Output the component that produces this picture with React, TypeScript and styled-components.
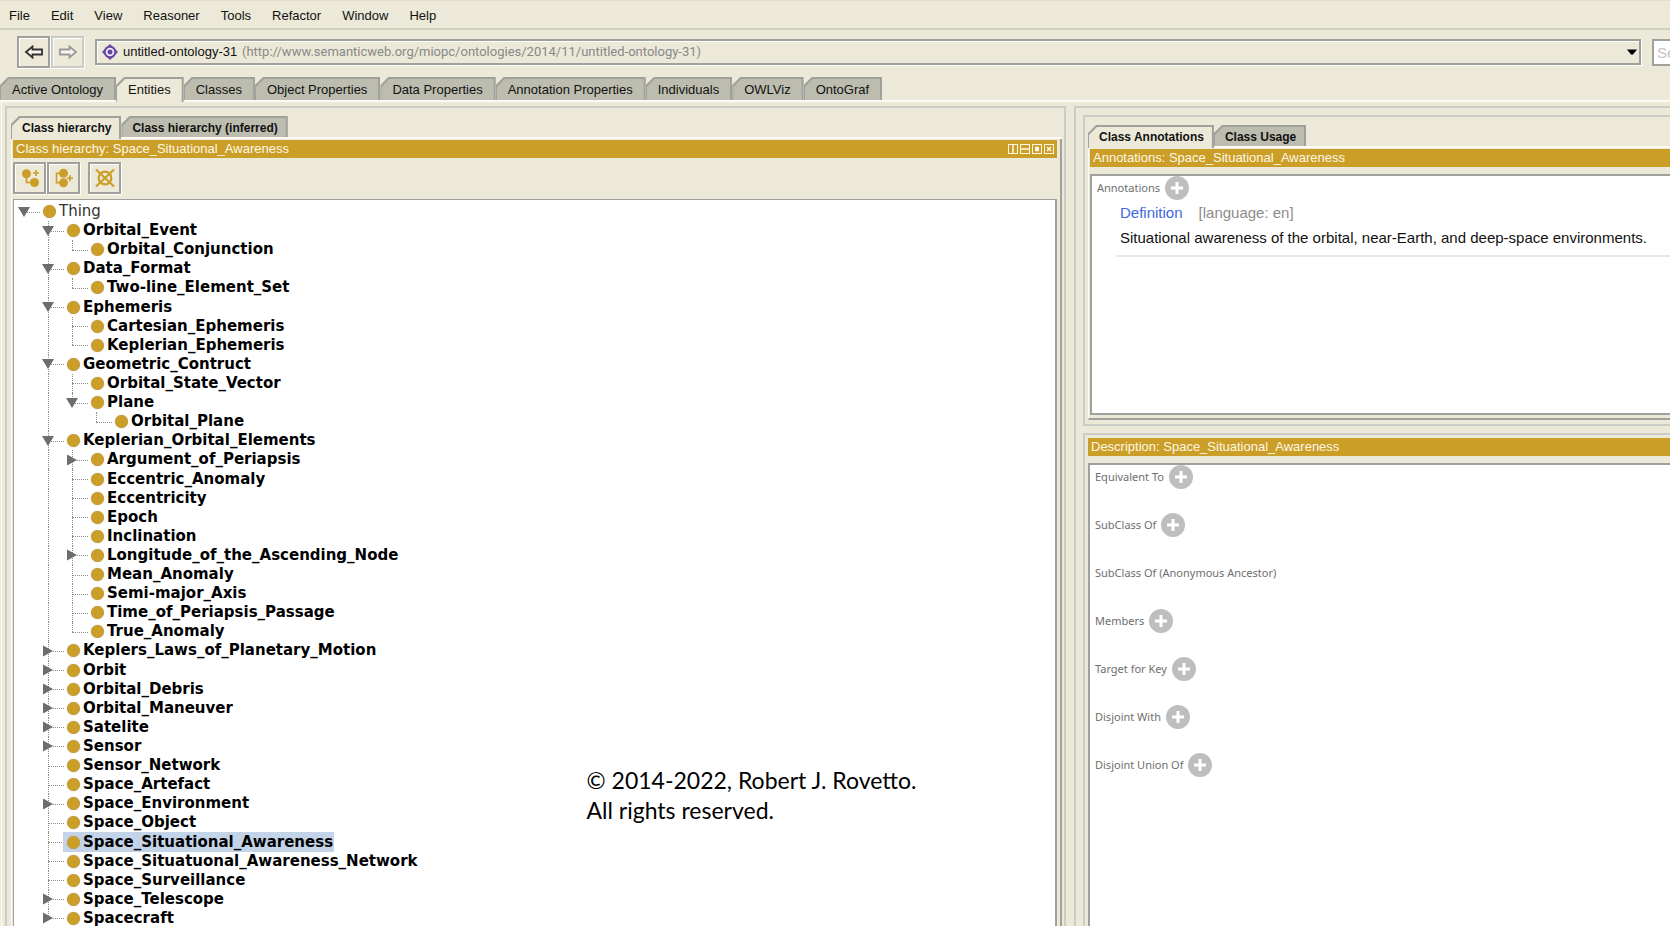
import React, { useState } from 'react';
import styled, { createGlobalStyle, css } from 'styled-components';

const color = {
  face: '#ece9d8',
  tab: '#bcbdae',
  edge: '#a0a19d',
  soft: '#cbccc6',
  gold: '#cb9e28',
  select: '#c3d3e8',
  label: '#6e6e6e',
};

const GlobalStyle = createGlobalStyle`
  * { box-sizing: border-box; }
  body {
    margin: 0;
    background: ${color.face};
    color: #111;
    font: 13px/16px "Liberation Sans", Arial, sans-serif;
    overflow: hidden;
  }
  button, input, select { font: inherit; color: inherit; }
  ul { list-style: none; margin: 0; padding: 0; }
`;

const Window = styled.div`
  display: flex;
  flex-direction: column;
  height: 100vh;
  overflow: hidden;
`;

/* ---------- menu and location bar ---------- */

const MenuBar = styled.nav`
  display: flex;
  height: 30px;
  flex: none;
  border-top: 1px solid #e0dfcc;
  border-bottom: 2px solid #cfd1bf;
`;

const MenuItem = styled.button`
  border: 0;
  background: none;
  padding: 2px 12px 0 9px;
`;

const LocationBar = styled.div`
  display: flex;
  align-items: center;
  flex: none;
  height: 47px;
  padding: 0 0 3px 17px;
  overflow: hidden;
`;

const raised = css`
  border: 2px solid ${color.edge};
  box-shadow: 1px 1px 0 #fff, inset 1px 1px 0 #fff;
  background: ${color.face};
`;

const SquareButton = styled.button`
  ${raised}
  display: flex;
  flex: none;
  align-items: center;
  justify-content: center;
  width: 33px;
  height: 32px;
  padding: 0;
  margin-right: 1px;
  &:disabled { border-color: ${color.soft}; }
`;

const LocationField = styled.label`
  ${raised}
  display: flex;
  align-items: center;
  flex: 0 0 calc(100% - 107px);
  height: 26px;
  margin: 0 11px 0 10px;
  padding: 0 2px 0 5px;
`;

const LocationSelect = styled.select`
  appearance: none;
  border: 0;
  background: none;
  margin-left: 5px;
  padding: 0;
  outline: none;
`;

const LocationUrl = styled.span`
  flex: 1;
  margin-left: 4px;
  color: #888;
  font-family: Roboto, Arial, sans-serif;
`;

const SearchInput = styled.input`
  flex: 0 0 180px;
  height: 27px;
  border: 2px solid ${color.edge};
  background: #fff;
  padding: 0 3px;
  font-size: 15px;
  &::placeholder { color: #c4c4c4; opacity: 1; }
`;

/* ---------- tabs ---------- */

const TabList = styled.div`
  display: flex;
  flex: none;
  border-bottom: 2px solid #fbfaf5;
`;

const chamfer = 'polygon(8px 0, 100% 0, 100% 100%, 0 100%, 0 8px)';

const Tab = styled.button<{ $small?: boolean }>`
  position: relative;
  isolation: isolate;
  border: 0;
  background: ${color.edge};
  clip-path: ${chamfer};
  height: ${(p) => (p.$small ? 21 : 23)}px;
  padding: ${(p) => (p.$small ? '2px 10px 0 11px' : '2px 13px 0 12px')};
  font-size: ${(p) => (p.$small ? 12 : 13)}px;
  font-weight: ${(p) => (p.$small ? 'bold' : 'normal')};
  white-space: nowrap;

  &::before {
    content: '';
    position: absolute;
    z-index: -1;
    inset: 2px 2px 0 1px;
    clip-path: ${chamfer};
    background: ${color.tab};
  }
  &[aria-selected='true'] {
    margin-bottom: -2px;
    height: ${(p) => (p.$small ? 23 : 25)}px;
    padding-bottom: 2px;
  }
  &[aria-selected='true']::before { background: ${color.face}; }
`;

/* ---------- panels ---------- */

const Workspace = styled.main`
  display: grid;
  grid-template-columns: minmax(0, 1061fr) minmax(0, 596fr);
  gap: 8px;
  flex: 1;
  min-height: 0;
  margin-left: 1px;
  padding: 4px 0 0 3px;
  border-left: 1px solid #fbfaf5;
`;

const LeftColumn = styled.section`
  display: flex;
  flex-direction: column;
  min-height: 0;
  border: 2px solid ${color.soft};
  border-bottom: 0;
  padding: 8px 2px 0 4px;
`;

const RightColumn = styled.section`
  display: flex;
  flex-direction: column;
  gap: 7px;
  min-height: 0;
  border: 2px solid ${color.soft};
  border-right: 0;
  border-bottom: 0;
  padding: 7px 0 0 7px;
`;

const SubPanel = styled.section<{ $fill?: boolean }>`
  display: flex;
  flex-direction: column;
  border: 2px solid ${color.soft};
  border-right: 0;
  ${(p) =>
    p.$fill
      ? css`flex: 1; min-height: 0; border-bottom: 0; padding: 3px 0 0 3px;`
      : css`flex: 0 0 311px; padding: 8px 0 4px 3px;`}
`;

const TabBody = styled.div<{ $framed?: 'right' | 'bottom' }>`
  display: flex;
  flex-direction: column;
  flex: 1;
  min-height: 0;
  border-left: 1px solid #fbfaf5;
  padding: 1px 0 0 1px;
  ${(p) => p.$framed === 'right' && css`border-right: 2px solid ${color.edge}; padding: 1px 3px 0 1px;`}
  ${(p) => p.$framed === 'bottom' && css`border-bottom: 2px solid ${color.edge}; padding-bottom: 3px;`}
`;

const TitleBar = styled.header`
  display: flex;
  align-items: center;
  justify-content: space-between;
  flex: none;
  height: 18px;
  padding: 0 3px;
  background: ${color.gold};
  color: #fdf8e6;
`;

const TitleText = styled.h2`
  margin: 0;
  font-size: 13px;
  line-height: 18px;
  font-weight: normal;
`;

const TitleTools = styled.div`
  display: flex;
  gap: 2px;
`;

const TitleTool = styled.button`
  display: flex;
  border: 0;
  padding: 0;
  background: none;
`;

const TreeTools = styled.div`
  display: flex;
  flex: none;
  padding: 4px 0 5px;
`;

const ToolGap = styled.span`
  width: 7px;
`;

const ContentBox = styled.div<{ $gap?: boolean }>`
  position: relative;
  flex: 1;
  min-height: 0;
  margin-top: ${(p) => (p.$gap ? 7 : 0)}px;
  border: 2px solid ${color.edge};
  border-width: 2px 0 0 2px;
  background: #fff;
`;

const AnnotationBox = styled(ContentBox)`
  border-bottom-width: 2px;
`;

/* ---------- class tree ---------- */

const TreeBox = styled(ContentBox)`
  border-width: 1px 2px 0 1px;
  display: flex;
`;

const Tree = styled.ul`
  display: grid;
  flex: 1;
  grid-auto-rows: minmax(19px, 1fr);
  margin: 2px 0 -2px;
`;

const TreeRow = styled.li`
  display: flex;
  align-items: stretch;
`;

const dots = '1px dotted #8d8d8d';

const Guide = styled.span<{ $line?: 'full' | 'half' | 'none'; $branch?: boolean }>`
  position: relative;
  display: flex;
  align-items: center;
  flex: none;
  width: 24px;
  padding-left: 4px;

  &::before {
    content: '';
    position: absolute;
    left: 10px;
    top: 0;
    height: ${(p) => (p.$line === 'half' ? '50%' : '100%')};
    border-left: ${(p) => (p.$line && p.$line !== 'none' ? dots : '0')};
  }
  &::after {
    content: '';
    position: absolute;
    left: 10px;
    top: 50%;
    width: 16px;
    border-top: ${(p) => (p.$branch ? dots : '0')};
  }
`;

const Toggle = styled.button`
  position: relative;
  z-index: 1;
  display: flex;
  border: 0;
  padding: 0;
  background: none;
`;

const Node = styled.span<{ $selected?: boolean; $plain?: boolean }>`
  position: relative;
  display: flex;
  align-items: center;
  gap: 3px;
  margin-left: 1px;
  padding: 0 1px 0 4px;
  background: ${(p) => (p.$selected ? color.select : 'transparent')};
  color: ${(p) => (p.$plain ? '#333' : '#000')};
  font: ${(p) => (p.$plain ? 'normal' : 'bold')} 15px/19px "DejaVu Sans", Verdana, sans-serif;
  white-space: nowrap;

  &::before {
    content: '';
    width: 13px;
    height: 13px;
    border-radius: 50%;
    background: ${color.gold};
    box-shadow: 0 0 1px #999;
  }
`;

const Copyright = styled.p`
  position: absolute;
  left: 55%;
  bottom: 101px;
  margin: 0;
  color: #000;
  font: 23px/30px Lato, Calibri, sans-serif;
  white-space: nowrap;
`;

/* ---------- frames on the right ---------- */

const SectionRow = styled.div`
  display: flex;
  align-items: center;
  gap: 5px;
  height: 24px;
  padding-left: 5px;
  color: ${color.label};
  font: 11px/16px "Noto Sans", Arial, sans-serif;
`;

const SectionList = styled.div`
  display: grid;
  gap: 24px;
`;

const AddButton = styled.button`
  display: flex;
  border: 0;
  padding: 0;
  background: none;
`;

const Annotation = styled.article`
  margin-left: 24px;
  padding: 3px 0 7px 4px;
  border-bottom: 2px solid #e8e8e8;
  font-size: 15px;
  line-height: 20px;
`;

const AnnotationHead = styled.div`
  display: flex;
  gap: 16px;
  color: #8c8c8c;
`;

const PropertyLink = styled.a`
  color: #4169e1;
  text-decoration: none;
`;

const AnnotationText = styled.p`
  margin: 5px 0 0;
  color: #111;
  white-space: nowrap;
`;

/* ---------- icons ---------- */

const ArrowIcon = ({ forward }: { forward?: boolean }) => (
  <svg width="20" height="14" viewBox="0 0 20 14" aria-hidden="true">
    <path
      d={forward ? 'M18 7L11.5 1.5V4.5H2V9.5H11.5V12.5Z' : 'M2 7L8.500 1.500V4.500H18V9.500H8.500V12.500Z'}
      fill="#f6f5ee"
      stroke={forward ? '#999' : '#333'}
      strokeWidth="1.8"
    />
  </svg>
);

const OntologyIcon = () => (
  <svg width="16" height="16" viewBox="0 0 16 16" aria-hidden="true">
    <path d="M8 0L16 8L8 16L0 8Z" fill="#6644a6" />
    <circle cx="8" cy="8" r="6.200" fill="#6644a6" />
    <circle cx="8" cy="8" r="3.400" fill="#6644a6" stroke="#f1ecf6" strokeWidth="1.800" />
  </svg>
);

const DropIcon = () => (
  <svg width="10" height="6" viewBox="0 0 10 6" aria-hidden="true">
    <path d="M0 0.500H10L6 5.500H4Z" fill="#000" />
  </svg>
);

const AddSubIcon = () => (
  <svg width="24" height="24" viewBox="0 0 24 24" fill={color.gold} stroke={color.gold} aria-hidden="true">
    <circle cx="8.500" cy="7.700" r="4.500" stroke="none" />
    <circle cx="16.500" cy="16.500" r="4.500" stroke="none" />
    <path d="M8.500 8V16.500H15M18 4V10M15 7H21" fill="none" strokeWidth="1.700" />
  </svg>
);

const AddSiblingIcon = () => (
  <svg width="24" height="24" viewBox="0 0 24 24" fill={color.gold} stroke={color.gold} aria-hidden="true">
    <circle cx="11.500" cy="7.300" r="4.500" stroke="none" />
    <circle cx="11.500" cy="16.700" r="4.500" stroke="none" />
    <path d="M10 7.300H4.500V16.700H10M18 9.300V15.300M15 12.300H21" fill="none" strokeWidth="1.600" />
  </svg>
);

const DeleteIcon = () => (
  <svg width="24" height="24" viewBox="0 0 24 24" fill="none" stroke={color.gold} strokeWidth="2.200" aria-hidden="true">
    <circle cx="12" cy="12" r="6.300" />
    <path d="M3 3.500L21 20.500M21 3.500L3 20.500" />
  </svg>
);

const toolPaths = {
  'Split vertically': 'M5 1V9',
  'Split horizontally': 'M1 5H9',
  Float: 'M3 3.500H7M3 5H7M3 6.500H7',
  Close: 'M3 3L7 7M7 3L3 7',
};

const PlusIcon = () => (
  <svg width="24" height="24" viewBox="0 0 24 24" aria-hidden="true">
    <circle cx="12" cy="12" r="12" fill="#bebebe" />
    <path d="M12 6V18M6 12H18" stroke="#fff" strokeWidth="3" />
  </svg>
);

/* ---------- data ---------- */

type ClassNode = { name: string; children?: ClassNode[]; closed?: boolean };

const leaf = (name: string): ClassNode => ({ name });
const closed = (name: string): ClassNode => ({ name, closed: true });
const open = (name: string, ...children: ClassNode[]): ClassNode => ({ name, children });

const classes = open(
  'Thing',
  open('Orbital_Event', leaf('Orbital_Conjunction')),
  open('Data_Format', leaf('Two-line_Element_Set')),
  open('Ephemeris', leaf('Cartesian_Ephemeris'), leaf('Keplerian_Ephemeris')),
  open('Geometric_Contruct', leaf('Orbital_State_Vector'), open('Plane', leaf('Orbital_Plane'))),
  open(
    'Keplerian_Orbital_Elements',
    closed('Argument_of_Periapsis'),
    leaf('Eccentric_Anomaly'),
    leaf('Eccentricity'),
    leaf('Epoch'),
    leaf('Inclination'),
    closed('Longitude_of_the_Ascending_Node'),
    leaf('Mean_Anomaly'),
    leaf('Semi-major_Axis'),
    leaf('Time_of_Periapsis_Passage'),
    leaf('True_Anomaly'),
  ),
  closed('Keplers_Laws_of_Planetary_Motion'),
  closed('Orbit'),
  closed('Orbital_Debris'),
  closed('Orbital_Maneuver'),
  closed('Satelite'),
  closed('Sensor'),
  leaf('Sensor_Network'),
  leaf('Space_Artefact'),
  closed('Space_Environment'),
  leaf('Space_Object'),
  leaf('Space_Situational_Awareness'),
  leaf('Space_Situatuonal_Awareness_Network'),
  leaf('Space_Surveillance'),
  closed('Space_Telescope'),
  closed('Spacecraft'),
);

type Row = { node: ClassNode; last: boolean; ancestors: boolean[] };

const flatten = (node: ClassNode, last = true, ancestors: boolean[] = []): Row[] => [
  { node, last, ancestors },
  ...(node.children ?? []).flatMap((child, i, all) =>
    flatten(child, i === all.length - 1, [...ancestors, ancestors.length > 0 && !last]),
  ),
];

const menus = ['File', 'Edit', 'View', 'Reasoner', 'Tools', 'Refactor', 'Window', 'Help'];
const mainTabs = [
  'Active Ontology',
  'Entities',
  'Classes',
  'Object Properties',
  'Data Properties',
  'Annotation Properties',
  'Individuals',
  'OWLViz',
  'OntoGraf',
];
const sections = [
  { name: 'Equivalent To', add: true },
  { name: 'SubClass Of', add: true },
  { name: 'SubClass Of (Anonymous Ancestor)', add: false },
  { name: 'Members', add: true },
  { name: 'Target for Key', add: true },
  { name: 'Disjoint With', add: true },
  { name: 'Disjoint Union Of', add: true },
];

/* ---------- parts ---------- */

const Tabs = ({ names, initial = 0, small }: { names: string[]; initial?: number; small?: boolean }) => {
  const [current, setCurrent] = useState(initial);
  return (
    <TabList role="tablist">
      {names.map((name, i) => (
        <Tab key={name} role="tab" $small={small} aria-selected={i === current} onClick={() => setCurrent(i)}>
          {name}
        </Tab>
      ))}
    </TabList>
  );
};

const ClassTree = () => {
  const [selected, setSelected] = useState('Space_Situational_Awareness');
  return (
    <Tree role="tree" aria-label="Class hierarchy">
      {flatten(classes).map(({ node, last, ancestors }) => {
        const depth = ancestors.length;
        const hasToggle = Boolean(node.children || node.closed);
        return (
          <TreeRow
            key={node.name}
            role="treeitem"
            aria-level={depth + 1}
            aria-selected={node.name === selected}
            aria-expanded={hasToggle ? !node.closed : undefined}
            onClick={() => setSelected(node.name)}
          >
            {ancestors.map((line, i) => (
              <Guide key={i} $line={line ? 'full' : 'none'} />
            ))}
            <Guide $line={depth === 0 ? 'none' : last ? 'half' : 'full'} $branch>
              {hasToggle && (
                <Toggle aria-label={`Toggle ${node.name}`}>
                  <svg width="12" height="12" viewBox="0 0 12 12" aria-hidden="true">
                    <path d={node.closed ? 'M1 0.500V11.500L11 6Z' : 'M0 1H12L6 11Z'} fill="#6d6d6d" />
                  </svg>
                </Toggle>
              )}
            </Guide>
            <Node $selected={node.name === selected} $plain={depth === 0}>
              {node.name}
            </Node>
          </TreeRow>
        );
      })}
    </Tree>
  );
};

const SectionHeading = ({ name, add }: { name: string; add: boolean }) => (
  <SectionRow>
    <span>{name}</span>
    {add && (
      <AddButton aria-label={`Add ${name}`}>
        <PlusIcon />
      </AddButton>
    )}
  </SectionRow>
);

export default function App() {
  return (
    <Window>
      <GlobalStyle />
      <MenuBar>
        {menus.map((name) => (
          <MenuItem key={name}>{name}</MenuItem>
        ))}
      </MenuBar>
      <LocationBar>
        <SquareButton aria-label="Back">
          <ArrowIcon />
        </SquareButton>
        <SquareButton aria-label="Forward" disabled>
          <ArrowIcon forward />
        </SquareButton>
        <LocationField>
          <OntologyIcon />
          <LocationSelect aria-label="Active ontology">
            <option>untitled-ontology-31</option>
          </LocationSelect>
          <LocationUrl>(http://www.semanticweb.org/miopc/ontologies/2014/11/untitled-ontology-31)</LocationUrl>
          <DropIcon />
        </LocationField>
        <SearchInput type="search" aria-label="Search" placeholder="Search for entity" />
      </LocationBar>
      <Tabs names={mainTabs} initial={1} />
      <Workspace>
        <LeftColumn>
          <Tabs small names={['Class hierarchy', 'Class hierarchy (inferred)']} />
          <TabBody $framed="right">
            <TitleBar>
              <TitleText>Class hierarchy: Space_Situational_Awareness</TitleText>
              <TitleTools>
                {Object.entries(toolPaths).map(([name, d]) => (
                  <TitleTool key={name} aria-label={name}>
                    <svg width="10" height="10" viewBox="0 0 10 10" fill="none" stroke="#fdf8e6" aria-hidden="true">
                      <rect x="0.500" y="0.500" width="9" height="9" />
                      <path d={d} strokeWidth="1.500" />
                    </svg>
                  </TitleTool>
                ))}
              </TitleTools>
            </TitleBar>
            <TreeTools>
              <SquareButton aria-label="Add subclass">
                <AddSubIcon />
              </SquareButton>
              <SquareButton aria-label="Add sibling class">
                <AddSiblingIcon />
              </SquareButton>
              <ToolGap />
              <SquareButton aria-label="Delete class">
                <DeleteIcon />
              </SquareButton>
            </TreeTools>
            <TreeBox>
              <ClassTree />
              <Copyright>
                © 2014-2022, Robert J. Rovetto.
                <br />
                All rights reserved.
              </Copyright>
            </TreeBox>
          </TabBody>
        </LeftColumn>
        <RightColumn>
          <SubPanel>
            <Tabs small names={['Class Annotations', 'Class Usage']} />
            <TabBody $framed="bottom">
              <TitleBar>
                <TitleText>Annotations: Space_Situational_Awareness</TitleText>
              </TitleBar>
              <AnnotationBox $gap>
                <SectionHeading name="Annotations" add />
                <Annotation>
                  <AnnotationHead>
                    <PropertyLink href="#definition">Definition</PropertyLink>
                    <span>[language: en]</span>
                  </AnnotationHead>
                  <AnnotationText>
                    Situational awareness of the orbital, near-Earth, and deep-space environments.
                  </AnnotationText>
                </Annotation>
              </AnnotationBox>
            </TabBody>
          </SubPanel>
          <SubPanel $fill>
            <TitleBar>
              <TitleText>Description: Space_Situational_Awareness</TitleText>
            </TitleBar>
            <ContentBox $gap>
              <SectionList>
                {sections.map((section) => (
                  <SectionHeading key={section.name} {...section} />
                ))}
              </SectionList>
            </ContentBox>
          </SubPanel>
        </RightColumn>
      </Workspace>
    </Window>
  );
}
